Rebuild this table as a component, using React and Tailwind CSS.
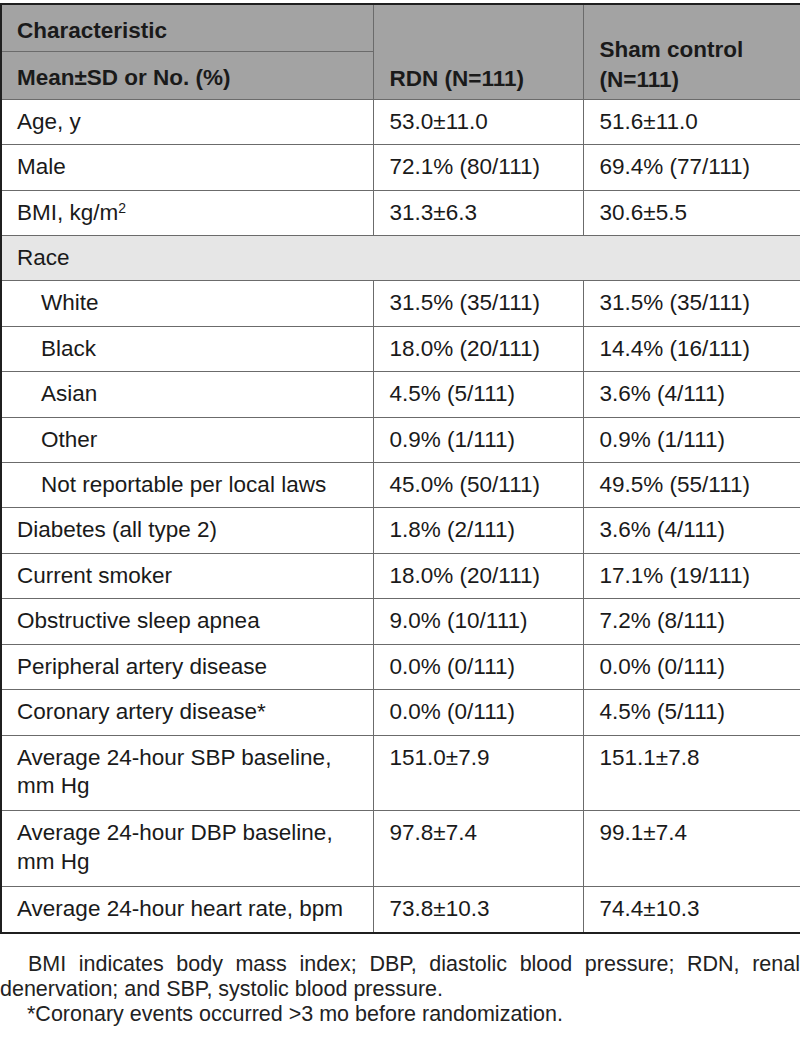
import React from "react";

const rows = [
  { label: "Age, y", a: "53.0±11.0", b: "51.6±11.0" },
  { label: "Male", a: "72.1% (80/111)", b: "69.4% (77/111)" },
  { label: <>BMI, kg/m<sup className="text-[14px] leading-none">2</sup></>, a: "31.3±6.3", b: "30.6±5.5" },
  { label: "Race", section: true },
  { label: "White", a: "31.5% (35/111)", b: "31.5% (35/111)", indent: true },
  { label: "Black", a: "18.0% (20/111)", b: "14.4% (16/111)", indent: true },
  { label: "Asian", a: "4.5% (5/111)", b: "3.6% (4/111)", indent: true },
  { label: "Other", a: "0.9% (1/111)", b: "0.9% (1/111)", indent: true },
  { label: "Not reportable per local laws", a: "45.0% (50/111)", b: "49.5% (55/111)", indent: true },
  { label: "Diabetes (all type 2)", a: "1.8% (2/111)", b: "3.6% (4/111)" },
  { label: "Current smoker", a: "18.0% (20/111)", b: "17.1% (19/111)" },
  { label: "Obstructive sleep apnea", a: "9.0% (10/111)", b: "7.2% (8/111)" },
  { label: "Peripheral artery disease", a: "0.0% (0/111)", b: "0.0% (0/111)" },
  { label: "Coronary artery disease*", a: "0.0% (0/111)", b: "4.5% (5/111)" },
  { label: <>Average 24-hour SBP baseline,<br />mm Hg</>, a: "151.0±7.9", b: "151.1±7.8", tall: true },
  { label: <>Average 24-hour DBP baseline,<br />mm Hg</>, a: "97.8±7.4", b: "99.1±7.4", tall: true },
  { label: "Average 24-hour heart rate, bpm", a: "73.8±10.3", b: "74.4±10.3" },
];

export default function App() {
  return (
    <div className="w-[800px] bg-white pt-[3px] text-[#1a1a1a]" style={{ fontFamily: '"Liberation Sans", Arial, sans-serif' }}>
      <table className="w-[800px] table-fixed border-collapse border-2 border-[#1f1f1f] text-[22.5px] leading-[28.4px]">
        <colgroup>
          <col className="w-[372px]" />
          <col className="w-[210px]" />
          <col className="w-[218px]" />
        </colgroup>
        <thead>
          <tr className="bg-[#a3a3a3] font-bold">
            <th className="border border-[#6b6b6b] pl-[15px] pt-[12px] pb-[6px] text-left align-middle font-bold">Characteristic</th>
            <th rowSpan={2} className="border border-[#6b6b6b] pl-[16px] pb-[5px] text-left align-bottom font-bold">RDN (N=111)</th>
            <th rowSpan={2} className="border border-[#6b6b6b] pl-[16px] pb-[4px] text-left align-bottom font-bold leading-[30px]">Sham control<br />(N=111)</th>
          </tr>
          <tr className="bg-[#a3a3a3]">
            <th className="border border-[#6b6b6b] pl-[15px] pt-[12px] pb-[6px] text-left align-middle font-bold">Mean±SD or No. (%)</th>
          </tr>
        </thead>
        <tbody>
          {rows.map((r, i) =>
            r.section ? (
              <tr key={i} className="bg-[#e6e6e6]">
                <td colSpan={3} className="border border-[#6b6b6b] pl-[15px] pt-[8px] pb-[8px]">{r.label}</td>
              </tr>
            ) : (
              <tr key={i}>
                <td className={`border border-[#6b6b6b] pt-[8px] align-top ${r.indent ? "pl-[39px]" : "pl-[15px]"} ${r.tall ? "pb-[10px]" : "pb-[8px]"}`}>{r.label}</td>
                <td className="border border-[#6b6b6b] pl-[16px] pt-[8px] align-top">{r.a}</td>
                <td className="border border-[#6b6b6b] pl-[16px] pt-[8px] align-top">{r.b}</td>
              </tr>
            )
          )}
        </tbody>
      </table>
      <div className="mt-[18px] text-[21.5px] leading-[25px] text-[#222]">
        <p className="indent-[28px] text-justify">BMI indicates body mass index; DBP, diastolic blood pressure; RDN, renal denervation; and SBP, systolic blood pressure.</p>
        <p className="indent-[27px]">*Coronary events occurred &gt;3 mo before randomization.</p>
      </div>
    </div>
  );
}
